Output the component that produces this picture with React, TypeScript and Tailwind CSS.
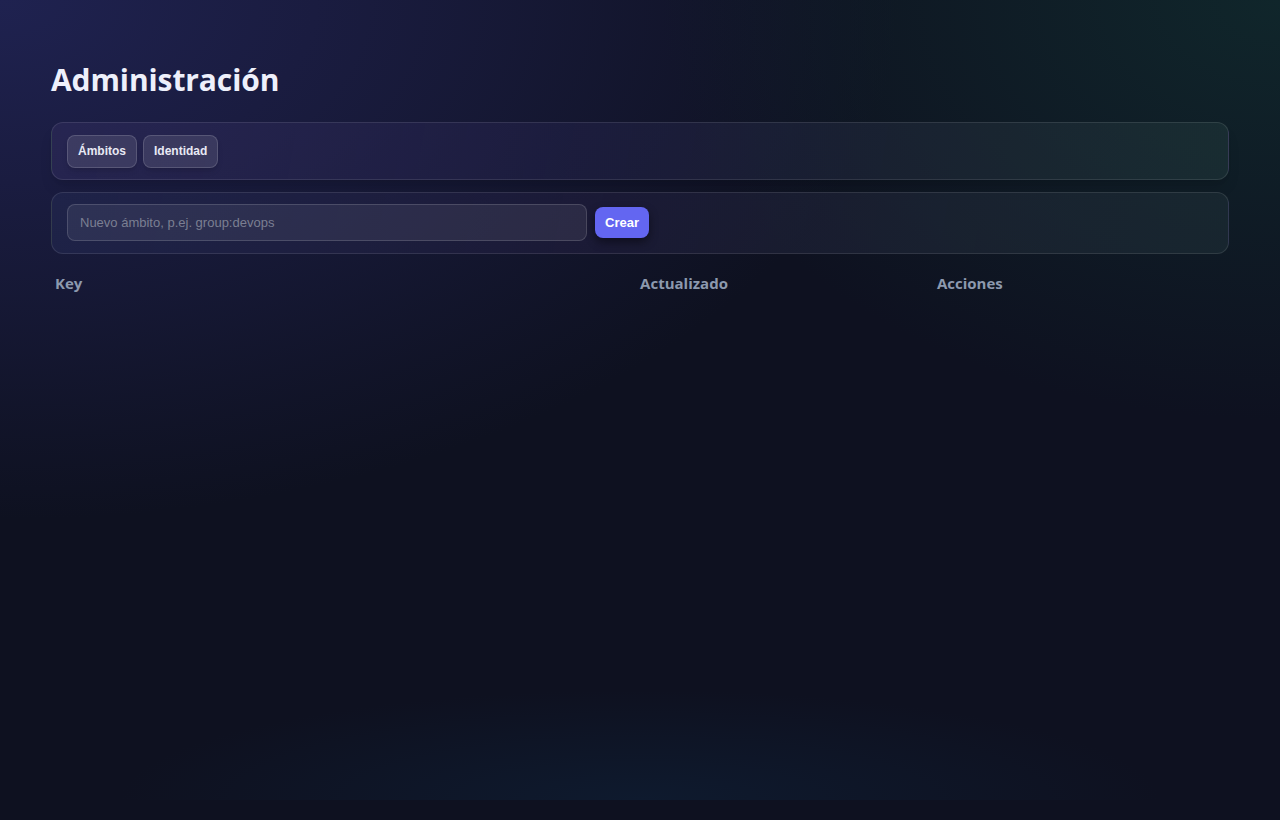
import React from "react";

const TABS = ["Ámbitos", "Identidad"];

export default function App() {
  return (
    <div
      className="relative min-h-[820px] w-full overflow-hidden bg-[#0e1120]"
      style={{ fontFamily: "'Open Sans', 'Noto Sans', sans-serif" }}
    >
      {/* background glows */}
      <div className="pointer-events-none absolute inset-0 bg-[radial-gradient(ellipse_900px_520px_at_0%_0%,#1f2250_0%,#1a1c40_35%,rgba(14,17,32,0)_100%)]" />
      <div className="pointer-events-none absolute inset-0 bg-[radial-gradient(ellipse_620px_420px_at_100%_0%,#10262b_0%,rgba(14,17,32,0)_100%)]" />
      <div className="pointer-events-none absolute left-0 right-0 top-0 h-[800px] bg-[radial-gradient(ellipse_520px_110px_at_50%_100%,#0e1a2e_0%,rgba(14,17,32,0)_100%)]" />

      <div className="relative px-[51px] pt-[60px]">
        <h1 className="text-[30px] font-bold leading-[40px] tracking-[-0.1px] text-[#eef0fb]">Administración</h1>

        <div className="mt-[22px] flex h-[58px] items-center gap-[6px] rounded-xl border border-white/10 bg-[linear-gradient(100deg,rgba(48,44,92,0.55)_0%,rgba(38,36,78,0.45)_45%,rgba(36,48,60,0.5)_80%,rgba(34,58,60,0.5)_100%)] px-[15px] shadow-lg">
          {TABS.map((t) => (
            <button
              key={t}
              className="h-[33px] rounded-lg border border-white/15 bg-white/10 px-[10px] text-[12px] font-bold text-[#e8e9f4] shadow-md"
              style={{ fontFamily: "'Liberation Sans', Arial, sans-serif" }}
            >
              {t}
            </button>
          ))}
        </div>

        <div className="mt-[12px] flex h-[62px] items-center gap-[8px] rounded-xl border border-white/10 bg-[linear-gradient(100deg,rgba(36,42,82,0.55)_0%,rgba(36,32,66,0.5)_45%,rgba(34,44,58,0.55)_80%,rgba(32,48,56,0.55)_100%)] px-[15px] pb-[1px]">
          <input
            placeholder="Nuevo ámbito, p.ej. group:devops"
            className="h-[37px] w-[520px] rounded-lg border border-white/15 bg-white/[0.07] px-[12px] text-[13px] text-[#e8e9f4] outline-none placeholder:text-[#7b7f92]"
            style={{ fontFamily: "'Liberation Sans', Arial, sans-serif" }}
          />
          <button
            className="h-[31px] rounded-lg bg-[#6366f1] px-[10px] text-[13px] font-semibold text-white shadow-[0_4px_10px_rgba(0,0,0,0.45)]"
            style={{ fontFamily: "'Liberation Sans', Arial, sans-serif" }}
          >
            Crear
          </button>
        </div>

        <table className="mt-[10px] w-full border-collapse">
          <thead>
            <tr className="text-left text-[15px] font-bold text-[#8c99ae]">
              <th className="w-[49.5%] px-[4px] py-[8px] font-bold">Key</th>
              <th className="w-[25.2%] px-[6px] py-[8px] font-bold">Actualizado</th>
              <th className="px-[6px] py-[8px] font-bold">Acciones</th>
            </tr>
          </thead>
          <tbody />
        </table>
      </div>
    </div>
  );
}
